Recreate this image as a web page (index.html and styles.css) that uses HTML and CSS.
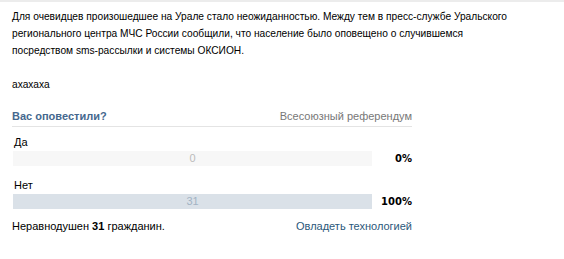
FILE: index.html
```html
<!DOCTYPE html>
<html lang="ru">
<head>
    <meta charset="UTF-8">
    <title>Опрос</title>
    <link rel="stylesheet" href="styles.css">
</head>
<body>
    <div class="post">
        <div class="post-text">
            <p>Для очевидцев произошедшее на Урале стало неожиданностью. Между тем в пресс-службе Уральского<br>
            регионального центра МЧС России сообщили, что население было оповещено о случившемся<br>
            посредством sms-рассылки и системы ОКСИОН.</p>
            <p>ахахаха</p>
        </div>
        <div class="poll">
            <div class="poll-head">
                <span class="poll-title">Вас оповестили?</span>
                <span class="poll-type">Всесоюзный референдум</span>
            </div>
            <div class="poll-option">
                <div class="option-label">Да</div>
                <div class="option-row">
                    <div class="option-bar">0</div>
                    <div class="option-percent">0%</div>
                </div>
            </div>
            <div class="poll-option">
                <div class="option-label">Нет</div>
                <div class="option-row">
                    <div class="option-bar filled">31</div>
                    <div class="option-percent">100%</div>
                </div>
            </div>
            <div class="poll-foot">
                <span>Неравнодушен <b>31</b> гражданин.</span>
                <a href="#">Овладеть технологией</a>
            </div>
        </div>
    </div>
</body>
</html>
```

FILE: styles.css
```css
body {
    margin: 0;
    padding: 0;
    background: #fff;
    font-family: 'Liberation Sans', sans-serif;
    font-size: 11px;
    color: #000;
}

.post {
    border-top: 2px solid #ececec;
    padding: 6px 12px 0;
}

.post-text p {
    margin: 0;
    line-height: 17px;
    white-space: nowrap;
    font-size: 10.2px;
}

.post-text p + p {
    margin-top: 17px;
}

.poll {
    width: 400px;
    margin-top: 17px;
}

.poll-head {
    display: flex;
    justify-content: space-between;
    align-items: baseline;
    padding-bottom: 4px;
    border-bottom: 1px solid #e4e4e4;
}

.poll-title {
    font-weight: bold;
    color: #45688e;
}

.poll-type {
    color: #777;
}

.poll-option {
    margin-top: 8px;
}

.poll-option + .poll-option {
    margin-top: 12px;
}

.option-label {
    padding-left: 2px;
    line-height: 14px;
}

.option-row {
    display: flex;
    align-items: center;
    margin-top: 2px;
}

.option-bar {
    width: 359px;
    margin-left: 1px;
    height: 15px;
    line-height: 15px;
    background: #f7f7f7;
    color: #bbb;
    text-align: center;
}

.option-bar.filled {
    background: #dae1e8;
    color: #a3b3c4;
}

.option-percent {
    flex: 1;
    text-align: right;
    font-weight: bold;
    font-family: 'DejaVu Sans', sans-serif;
    font-size: 10px;
}

.poll-foot {
    display: flex;
    justify-content: space-between;
    margin-top: 11px;
}

.poll-foot a {
    color: #2b587a;
    text-decoration: none;
}
```
